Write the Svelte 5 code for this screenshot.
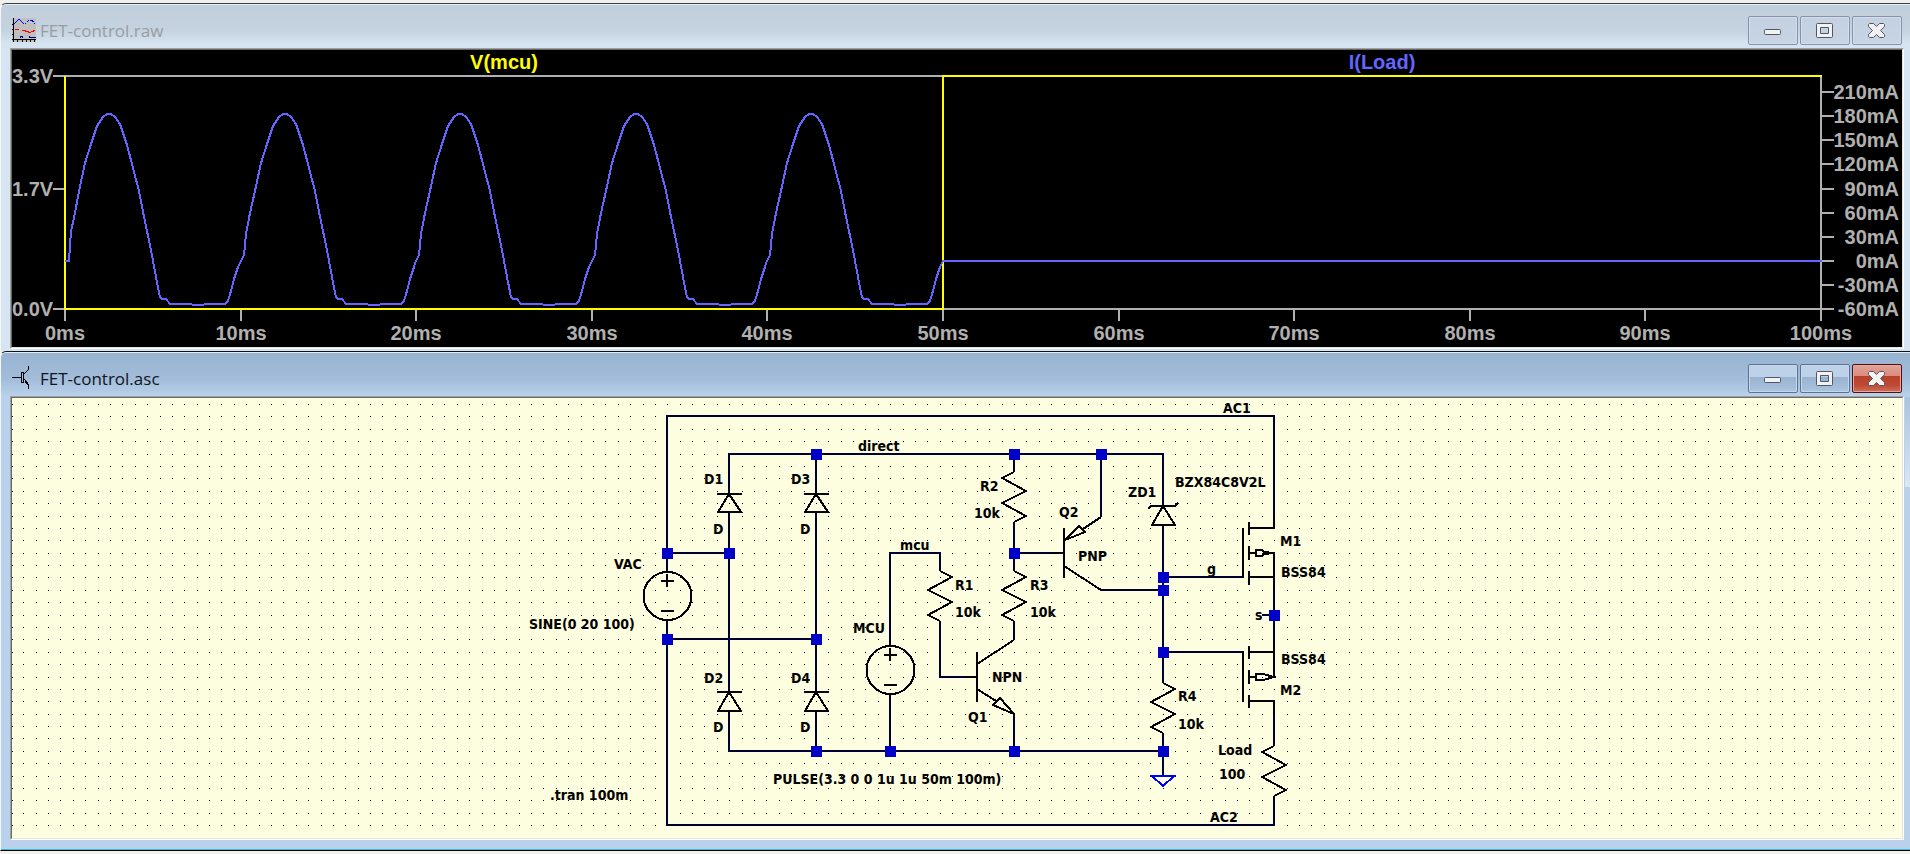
<script lang="ts">
	// waveform viewer
	const LEFT = 65;
	const RIGHT = 1821;
	const TOP = 76;
	const BOTTOM = 309;
	const MID = 943;
	const ZERO = 261;
	const period = (RIGHT - LEFT) / 10;

	const timeTicks = Array.from({ length: 11 }, (_, i) => ({
		x: Math.round(LEFT + period * i),
		label: `${i * 10}ms`
	}));

	const voltTicks = [
		{ y: TOP, label: '3.3V' },
		{ y: 189, label: '1.7V' },
		{ y: BOTTOM, label: '0.0V' }
	];

	const ampTicks = Array.from({ length: 10 }, (_, i) => ({
		y: Math.round(BOTTOM - 24.1 * i),
		label: `${-60 + 30 * i}mA`
	}));

	const rise = [[-1, 263], [3, 255], [5, 234], [9, 213]];
	const firstRise = [[0, 261], [4, 261], [6, 231], [9, 218]];
	const wave = [
		[14, 191], [20, 163], [26, 144], [32, 126], [38, 117], [42, 114], [46, 114], [50, 117], [55, 124],
		[62, 145], [68, 168], [74, 191], [79, 217], [86, 250], [91, 277], [95, 297], [97, 299], [101, 299],
		[105, 304], [126, 304], [128, 305], [138, 305], [140, 304], [160, 304], [163, 301], [166, 291],
		[169, 279], [173, 267]
	];

	const load: string[] = [];
	for (let n = 0; n < 5; n++) {
		for (const [x, y] of [...(n ? rise : firstRise), ...wave]) {
			load.push(`${Math.round(LEFT + n * period + x)},${y}`);
		}
	}
	load.push(`${MID},${ZERO}`, `${RIGHT + 1},${ZERO}`);

	// schematic grid
	let dots = '';
	for (let r = 0; r < 35; r++) {
		for (let c = 0; c < 153; c++) {
			const x = Math.max(12, Math.floor(11.42 + 12.385 * c));
			dots += `M${x} ${Math.floor(404.57 + 12.385 * r)}h1v1h-1z`;
		}
	}

	const wires = [
		'M667 571V416H1274V528',
		'M667 620V825H1274V796',
		'M729 494V454H1163V506',
		'M729 512V692M729 711V751H1163',
		'M667 553H729M667 639H816',
		'M816 454V494M816 512V692M816 711V751',
		'M890 646V553H940V571M890 694V751',
		'M940 621V677H977',
		'M1014 454V472M1014 522V571M1014 621V640M1014 714V751',
		'M1014 553H1064M1101 454V517M1101 590H1163',
		'M1163 525V683M1163 733V775',
		'M1163 577H1243M1163 652H1243',
		'M1274 577V652M1262 615H1274M1274 701V746'
	].join('');

	const nodes = [
		[816, 454], [1014, 454], [1101, 454], [667, 553], [729, 553], [1014, 553],
		[1163, 577], [1163, 590], [1274, 615], [667, 639], [816, 639], [1163, 652],
		[816, 751], [890, 751], [1014, 751], [1163, 751]
	];

	const diodes = [
		{ x: 729, y: 494, h: 18 },
		{ x: 816, y: 494, h: 18 },
		{ x: 729, y: 692, h: 19 },
		{ x: 816, y: 692, h: 19 },
		{ x: 1163, y: 506, h: 19 }
	];

	// dir is the side of the first zigzag
	const resistors = [
		{ x: 1014, y: 472, dir: -1 },
		{ x: 940, y: 571, dir: 1 },
		{ x: 1014, y: 571, dir: 1 },
		{ x: 1163, y: 683, dir: 1 },
		{ x: 1274, y: 746, dir: -1 }
	];
	const zigzag = (x: number, y: number, d: number) =>
		`M${x} ${y}l${12 * d} 6l${-24 * d} 13l${24 * d} 12l${-24 * d} 13l${12 * d} 6`;

	const sources = [
		{ x: 667, y: 596 },
		{ x: 890, y: 670 }
	];

	const labels = [
		{ x: 704, y: 484, text: 'D1' },
		{ x: 791, y: 484, text: 'D3' },
		{ x: 713, y: 534, text: 'D' },
		{ x: 800, y: 534, text: 'D' },
		{ x: 704, y: 683, text: 'D2' },
		{ x: 791, y: 683, text: 'D4' },
		{ x: 713, y: 732, text: 'D' },
		{ x: 800, y: 732, text: 'D' },
		{ x: 614, y: 569, text: 'VAC' },
		{ x: 529, y: 629, text: 'SINE(0 20 100)' },
		{ x: 853, y: 633, text: 'MCU' },
		{ x: 773, y: 784, text: 'PULSE(3.3 0 0 1u 1u 50m 100m)' },
		{ x: 550, y: 800, text: '.tran 100m' },
		{ x: 858, y: 451, text: 'direct' },
		{ x: 900, y: 550, text: 'mcu' },
		{ x: 980, y: 491, text: 'R2' },
		{ x: 974, y: 518, text: '10k' },
		{ x: 1059, y: 517, text: 'Q2' },
		{ x: 1128, y: 497, text: 'ZD1' },
		{ x: 1078, y: 561, text: 'PNP' },
		{ x: 955, y: 590, text: 'R1' },
		{ x: 955, y: 617, text: '10k' },
		{ x: 1030, y: 590, text: 'R3' },
		{ x: 1030, y: 617, text: '10k' },
		{ x: 992, y: 682, text: 'NPN' },
		{ x: 968, y: 722, text: 'Q1' },
		{ x: 1175, y: 487, text: 'BZX84C8V2L' },
		{ x: 1223, y: 413, text: 'AC1' },
		{ x: 1207, y: 574, text: 'g' },
		{ x: 1280, y: 546, text: 'M1' },
		{ x: 1281, y: 577, text: 'BSS84' },
		{ x: 1255, y: 620, text: 's' },
		{ x: 1281, y: 664, text: 'BSS84' },
		{ x: 1280, y: 695, text: 'M2' },
		{ x: 1178, y: 701, text: 'R4' },
		{ x: 1178, y: 729, text: '10k' },
		{ x: 1218, y: 755, text: 'Load' },
		{ x: 1219, y: 779, text: '100' },
		{ x: 1210, y: 822, text: 'AC2' }
	];
</script>

{#snippet controls()}
	<div class="controls">
		<button type="button" aria-label="Minimize">
			<svg width="20" height="19" viewBox="0 0 20 19">
				<rect x="1.5" y="8.5" width="16" height="5" rx="1" fill="#f2f2f0" stroke="#50556b" />
			</svg>
		</button>
		<button type="button" aria-label="Maximize">
			<svg width="20" height="19" viewBox="0 0 20 19">
				<path
					d="M2.5 2.5h14q1 0 1 1v12q0 1-1 1h-14q-1 0-1-1v-12q0-1 1-1zM5.5 6.5v6h8v-6z"
					fill="#f2f2f0"
					fill-rule="evenodd"
					stroke="#50556b"
				/>
			</svg>
		</button>
		<button type="button" class="close" aria-label="Close">
			<svg width="20" height="19" viewBox="0 0 20 19">
				<path
					d="M2.500 2.500H6.500L9.500 5.500L12.500 2.500H16.500L17.500 3.500V5.500L13.500 9.500L17.500 13.500V15.500L16.500 16.500H12.500L9.500 13.500L6.500 16.500H2.500L1.500 15.500V13.500L5.500 9.500L1.500 5.500V3.500Z"
					fill="#f2f2f0"
					stroke="#50556b"
					stroke-linejoin="round"
				/>
			</svg>
		</button>
	</div>
{/snippet}

<main>
	<section class="window">
		<header>
			<svg class="icon" width="24" height="24" viewBox="0 0 24 24" shape-rendering="crispEdges">
				<rect width="24" height="24" fill="#c0c0c0" />
				<path d="M1.500 0V24M0 21.500H24M0 6.500H2M0 11.500H2M0 16.500H2M5.500 22V24M10.500 22V24M14.500 22V24M18.500 22V24M22.500 22V24" stroke="#000" fill="none" />
				<path d="M2 6L7 1L12 6" stroke="#00f" fill="none" />
				<path d="M13 6L16 3L20 2L23 6" stroke="#00f" stroke-dasharray="2 1" fill="none" />
				<path d="M3 11.500H7M10 12.500H12L15 13.500L18 14.500L20 13.500L23 12.500" stroke="#f00" fill="none" />
				<path d="M8.500 20V18.500H10.500V20M17.500 18V19.500H24" stroke="#000080" fill="none" />
			</svg>
			<h1>FET-control.raw</h1>
			{@render controls()}
		</header>
		<div class="client plot">
			<svg viewBox="12 50 1890 297" role="img" aria-label="V(mcu) and I(Load) traces">
				<g class="axis">
					<path d="M{LEFT} {TOP}H{RIGHT}V{BOTTOM}H{LEFT}Z" />
					{#each timeTicks as t}
						<path d="M{t.x} {BOTTOM}v12" />
					{/each}
					{#each voltTicks as t}
						<path d="M{LEFT} {t.y}h-12" />
					{/each}
					{#each ampTicks as t}
						<path d="M{RIGHT} {t.y}h13" />
					{/each}
				</g>
				<path class="volts" d="M{LEFT} {TOP}V{BOTTOM}H{MID}V{TOP}H{RIGHT + 1}" />
				<polyline class="amps" points={load.join(' ')} />
				<g class="scale">
					{#each voltTicks as t}
						<text x="12" y={t.y + 7}>{t.label}</text>
					{/each}
					{#each timeTicks as t}
						<text class="mid" x={t.x} y="340">{t.label}</text>
					{/each}
					{#each ampTicks as t}
						<text class="end" x="1899" y={t.y + 7}>{t.label}</text>
					{/each}
					<text class="mid mcu" x="504" y="69">V(mcu)</text>
					<text class="mid load" x="1382" y="69">I(Load)</text>
				</g>
			</svg>
		</div>
	</section>

	<section class="window active">
		<header>
			<svg class="icon" width="24" height="24" viewBox="0 0 24 24" shape-rendering="crispEdges">
				<path d="M0 11.500H9M9.500 6V17M11.500 6V17M9 6.500H12M9 16.500H12M12 8L16.500 3.500V0M12 13L16.500 18.500V23" stroke="#000" fill="none" />
				<path d="M13 16h3v4z" />
			</svg>
			<h1>FET-control.asc</h1>
			{@render controls()}
		</header>
		<div class="client sheet">
			<svg viewBox="12 398 1890 440" role="img" aria-label="FET-control schematic">
				<path d={dots} />
				<path class="wire" d={wires} />
				<g class="part">
					{#each diodes as d}
						<path d="M{d.x - 12} {d.y}h25M{d.x} {d.y}l-11 {d.h}h23z" />
					{/each}
					<path d="M1151 506l-3 3M1175 506l3-3" />
					{#each resistors as r}
						<path d={zigzag(r.x, r.y, r.dir)} />
					{/each}
					{#each sources as s}
						<circle cx={s.x + 0.5} cy={s.y} r="24" />
						<path d="M{s.x - 6} {s.y - 15}h13M{s.x} {s.y - 22}v13M{s.x - 6} {s.y + 15}h13" />
					{/each}

					<!-- Q2 -->
					<path d="M1064 528V578M1052 553H1064M1064 566L1101 590M1101 517L1083 529" />
					<path d="M1065 540L1079 526L1085 532Z" />
					<!-- Q1 -->
					<path d="M977 652V702M965 677H977M1014 640L977 664M977 689L996 701" />
					<path d="M1014 714L1000 698L993 705Z" />
					<!-- M1 -->
					<path d="M1243 528V578M1249 522V535M1249 546V560M1249 571V585" />
					<path d="M1274 516V528H1249M1249 553H1256M1249 577H1274M1274 552V590" />
					<path d="M1256 550H1262L1264 552L1274 553L1264 554L1262 556H1256Z" />
					<!-- M2 -->
					<path d="M1243 651V702M1249 646V659M1249 670V684M1249 695V708" />
					<path d="M1249 652H1274M1249 677H1256M1274 640V678M1249 701H1274V714" />
					<path d="M1256 674H1263L1274 677L1263 680H1256Z" />
				</g>
				<path class="ground" d="M1152 776H1174L1163 786Z" />
				{#each nodes as [x, y]}
					<rect class="node" x={x - 5} y={y - 5} width="11" height="11" />
				{/each}
				{#each labels as l}
					<text x={l.x} y={l.y}>{l.text}</text>
				{/each}
			</svg>
		</div>
	</section>
</main>

<style>
	:global(body) {
		margin: 0;
		background: #f0f0f0;
	}

	main {
		padding: 3px 0;
	}

	.window {
		position: relative;
		padding-bottom: 2px;
		border-top: 1px solid #3c3f42;
		border-left: 1px solid #f4f7fa;
		border-radius: 6px 0 0 0;
		box-shadow: inset 0 1px #e6edf4;
		background: #d7e4f2;
	}

	.window.active {
		padding-bottom: 10px;
		border-top-color: #101418;
		border-bottom: 1px solid #000;
		box-shadow: inset 0 1px #e2ecf6, inset 0 -1px #35bfd6;
		background: #b9d1ea;
	}

	.active::after {
		content: '';
		position: absolute;
		top: 45px;
		right: 0;
		width: 5px;
		height: 90px;
		background: linear-gradient(#a9c3df, #dbe7f5);
	}

	header {
		display: flex;
		align-items: center;
		height: 43px;
		margin-top: 1px;
		padding: 0 8px 0 11px;
		background: linear-gradient(#c1cedb, #c5d2df 60%, #d6e3f1 90%);
		border-radius: 5px 0 0 0;
	}

	.active header {
		background: linear-gradient(#98b4d1, #a2bcd9 60%, #b9d1ea);
	}

	.icon {
		margin-top: 7px;
	}

	h1 {
		flex: 1;
		margin: 9px 0 0 4px;
		font: 17px/24px 'Open Sans', 'Noto Sans', sans-serif;
		color: #9a9da0;
	}

	.active h1 {
		color: #10141c;
	}

	.controls {
		display: flex;
		gap: 2px;
		margin-top: 8px;
	}

	button {
		display: grid;
		place-items: center;
		box-sizing: border-box;
		width: 50px;
		height: 29px;
		padding: 0;
		border: 1px solid #8593ae;
		border-radius: 2px;
		box-shadow: inset 0 0 0 1px #d3deea;
		background: linear-gradient(#c4d1e0, #c7d4e4);
	}

	.active button {
		border-color: #5f7391;
		box-shadow: inset 0 0 0 1px #c4d8ee;
		background: linear-gradient(#bdd1e8 0 45%, #98b2d0 45%, #abc4df);
	}

	.active .close {
		border-color: #4f1016;
		box-shadow: inset 0 0 0 1px #e6a89d;
		background: linear-gradient(#e2a297, #d98a7c 42%, #b8412b 42%, #bd4a34 75%, #d0705a);
	}

	.client {
		margin: 0 6px 0 9px;
		border: 1px solid;
		border-color: #a0a0a0 #fff #fff #a0a0a0;
	}

	.client svg {
		display: block;
		width: 100%;
		box-sizing: border-box;
		border: 1px solid;
		border-color: #696969 #e3e3e3 #e3e3e3 #696969;
		shape-rendering: crispEdges;
	}

	.plot svg {
		background: #000;
	}

	.sheet svg {
		background: #fdfddf;
	}

	.client path,
	.client polyline,
	.client circle {
		stroke-width: 2;
	}

	.axis path {
		fill: none;
		stroke: #b0b0b0;
	}

	.volts {
		fill: none;
		stroke: #ff0;
	}

	.amps {
		fill: none;
		stroke: #6464ff;
	}

	.scale text {
		font: bold 20px 'Liberation Sans', Arial, sans-serif;
		fill: #b0b0b0;
	}

	.scale .mid {
		text-anchor: middle;
	}

	.scale .end {
		text-anchor: end;
	}

	.scale .mcu {
		fill: #ff0;
	}

	.scale .load {
		fill: #6464ff;
	}

	.wire {
		fill: none;
		stroke: #000030;
	}

	.part * {
		fill: none;
		stroke: #000;
	}

	.ground {
		fill: none;
		stroke: #00f;
	}

	.node {
		fill: #0000c8;
	}

	.sheet text {
		font: bold 14px 'DejaVu Sans Condensed', 'DejaVu Sans', Tahoma, sans-serif;
		fill: #000;
	}
</style>
